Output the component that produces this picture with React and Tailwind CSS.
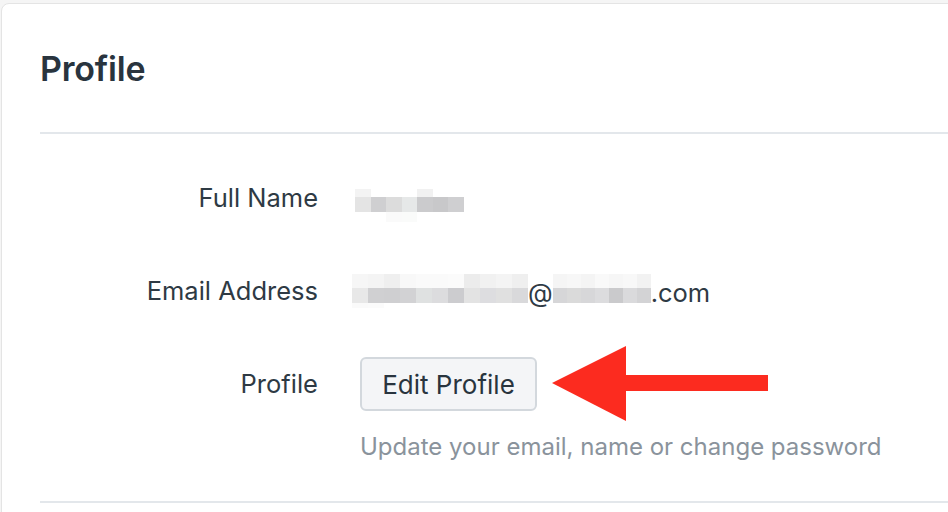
import React from 'react';

// pixelated (blurred) placeholder blocks, one array per row
const nameRows = [
  { h: 'h-[8px]', cells: ['bg-[#f3f3f3]', 'bg-white', 'bg-white', 'bg-white', 'bg-[#f1f1f1]', 'bg-white', 'bg-white'] },
  { h: 'h-[15px]', cells: ['bg-[#e4e4e4]', 'bg-[#cfcfd1]', 'bg-[#dcdcdc]', 'bg-[#e6e8e8]', 'bg-[#cbcbcd]', 'bg-[#c8c8ca]', 'bg-[#cfcfd1]'] },
  { h: 'h-[10px]', cells: ['bg-white', 'bg-white', 'bg-[#fafafa]', 'bg-[#fafbfa]', 'bg-white', 'bg-white', 'bg-white'] },
];

const userRows = [
  { h: 'h-[14px]', cells: ['bg-[#f6f6f6]', 'bg-[#f4f4f4]', 'bg-[#efefef]', 'bg-[#f8f8f8]', 'bg-[#fafafa]', 'bg-[#fafafa]', 'bg-[#fbfbfb]', 'bg-[#ececec]', 'bg-[#f1f1f1]', 'bg-[#f4f4f4]', 'bg-[#efefef]'] },
  { h: 'h-[15px]', cells: ['bg-[#e8e8e8]', 'bg-[#d0d0d2]', 'bg-[#cfcfd1]', 'bg-[#d2d2d4]', 'bg-[#dfe1e1]', 'bg-[#dcdcde]', 'bg-[#cccccf]', 'bg-[#e3e3e3]', 'bg-[#dddde0]', 'bg-[#e0e0e0]', 'bg-[#d9d9db]'] },
  { h: 'h-[5px]', cells: ['bg-[#fafafa]', 'bg-[#fbfbfb]', 'bg-white', 'bg-white', 'bg-white', 'bg-white', 'bg-white', 'bg-white', 'bg-white', 'bg-white', 'bg-white'] },
];

const domainRows = [
  { h: 'h-[14px]', cells: ['bg-[#f5f5f5]', 'bg-[#f7f7f7]', 'bg-[#f4f4f4]', 'bg-[#f9f9f9]', 'bg-[#f6f6f6]', 'bg-[#f8f8f8]', 'bg-[#f2f2f2]'] },
  { h: 'h-[15px]', cells: ['bg-[#d6d6d8]', 'bg-[#dadada]', 'bg-[#d7d7d9]', 'bg-[#dcdcde]', 'bg-[#cacacc]', 'bg-[#dadadc]', 'bg-[#d3d3d5]'] },
  { h: 'h-[5px]', cells: ['bg-white', 'bg-white', 'bg-white', 'bg-white', 'bg-white', 'bg-white', 'bg-white'] },
];

function Pixels({ rows, cell = 'w-[15.5px]' }) {
  return (
    <div className="inline-flex flex-col">
      {rows.map((r, i) => (
        <div key={i} className={`flex ${r.h}`}>
          {r.cells.map((c, j) => (
            <div key={j} className={`${cell} h-full ${c}`} />
          ))}
        </div>
      ))}
    </div>
  );
}

function Row({ label, children }) {
  return (
    <div className="grid grid-cols-[278px_1fr] gap-x-[40px] h-[54px] items-center">
      <div className="text-right text-[25.5px] text-[#2e3a44]">{label}</div>
      <div className="flex items-center">{children}</div>
    </div>
  );
}

export default function App() {
  return (
    <div
      className="relative w-[948px] h-[512px] overflow-hidden bg-[#f5f5f5] pt-[3px] pl-[1px]"
      style={{ fontFamily: 'Inter, "Noto Sans", sans-serif' }}
    >
      <div className="w-[1000px] h-[560px] bg-white border border-[#e4e4e4] rounded-tl-[8px] pl-[38px]">
        <div className="h-[128px] flex items-center">
          <h1 className="text-[34px] font-semibold text-[#29343e] tracking-[-0.2px]">Profile</h1>
        </div>
        <div className="h-[2px] bg-[#e3e7eb]" />

        <div className="pt-[37px] flex flex-col gap-y-[39px]">
          <Row label="Full Name">
            <div className="-ml-[3px] mt-[4px]">
              <Pixels rows={nameRows} />
            </div>
          </Row>
          <Row label="Email Address">
            <div className="flex items-center text-[25.5px] text-[#2e3a44] -ml-[6px]">
              <Pixels rows={userRows} cell="w-[16px]" />
              <span className="mt-[4px]">@</span>
              <Pixels rows={domainRows} cell="w-[14px]" />
              <span className="mt-[4px]">.com</span>
            </div>
          </Row>
          <Row label="Profile">
            <button className="ml-[2px] h-[54px] w-[177px] rounded-[6px] border-2 border-[#d3d8dd] bg-[#f4f5f7] text-[26px] text-[#29343e]">
              Edit Profile
            </button>
          </Row>
        </div>

        <div className="grid grid-cols-[278px_1fr] gap-x-[40px] mt-[20px]">
          <div />
          <p className="ml-[2px] text-[24px] leading-[32px] text-[#8a939c]">
            Update your email, name or change password
          </p>
        </div>

        <div className="mt-[38px] h-[2px] bg-[#e3e7eb]" />
      </div>

      {/* red annotation arrow pointing at the button */}
      <svg
        className="absolute left-[552px] top-[346px]"
        width="217"
        height="76"
        viewBox="0 0 217 76"
      >
        <polygon points="0,37 74,0 74,75" fill="#fc2b1f" />
        <rect x="72" y="29" width="144" height="16" fill="#fc2b1f" />
      </svg>
    </div>
  );
}
